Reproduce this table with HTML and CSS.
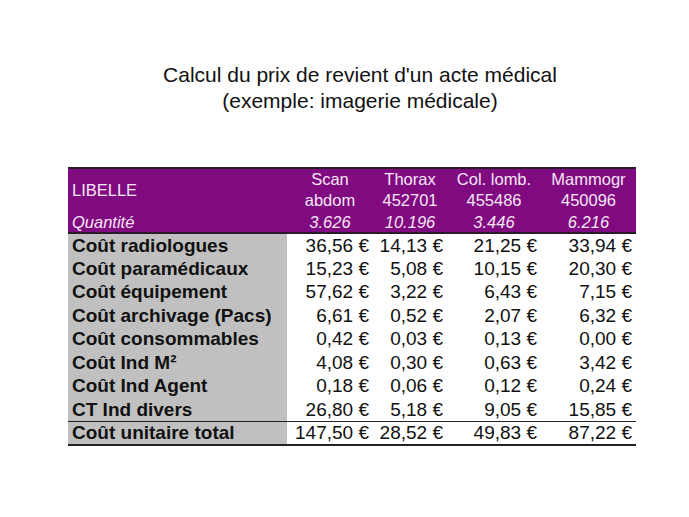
FILE: index.html
```html
<!DOCTYPE html>
<html lang="fr">
<head>
<meta charset="utf-8">
<title>Calcul du prix de revient</title>
<link rel="stylesheet" href="styles.css">
</head>
<body>
<div class="slide">
  <h1 class="title">Calcul du prix de revient d'un acte médical<br>(exemple: imagerie médicale)</h1>
  <table class="cost">
    <colgroup>
      <col class="c-label"><col class="c-scan"><col class="c-thorax"><col class="c-col"><col class="c-mammo">
    </colgroup>
    <thead>
      <tr class="h-main">
        <th class="lib">LIBELLE</th>
        <th>Scan<br>abdom</th>
        <th>Thorax<br>452701</th>
        <th>Col. lomb.<br>455486</th>
        <th>Mammogr<br>450096</th>
      </tr>
      <tr class="h-qty">
        <th class="lib">Quantité</th>
        <th>3.626</th>
        <th>10.196</th>
        <th>3.446</th>
        <th>6.216</th>
      </tr>
    </thead>
    <tbody>
      <tr><th>Coût radiologues</th><td>36,56 €</td><td>14,13 €</td><td>21,25 €</td><td>33,94 €</td></tr>
      <tr><th>Coût paramédicaux</th><td>15,23 €</td><td>5,08 €</td><td>10,15 €</td><td>20,30 €</td></tr>
      <tr><th>Coût équipement</th><td>57,62 €</td><td>3,22 €</td><td>6,43 €</td><td>7,15 €</td></tr>
      <tr><th>Coût archivage (Pacs)</th><td>6,61 €</td><td>0,52 €</td><td>2,07 €</td><td>6,32 €</td></tr>
      <tr><th>Coût consommables</th><td>0,42 €</td><td>0,03 €</td><td>0,13 €</td><td>0,00 €</td></tr>
      <tr><th>Coût Ind M²</th><td>4,08 €</td><td>0,30 €</td><td>0,63 €</td><td>3,42 €</td></tr>
      <tr><th>Coût Ind Agent</th><td>0,18 €</td><td>0,06 €</td><td>0,12 €</td><td>0,24 €</td></tr>
      <tr><th>CT Ind divers</th><td>26,80 €</td><td>5,18 €</td><td>9,05 €</td><td>15,85 €</td></tr>
      <tr class="total"><th>Coût unitaire total</th><td>147,50 €</td><td>28,52 €</td><td>49,83 €</td><td>87,22 €</td></tr>
    </tbody>
  </table>
</div>
</body>
</html>
```

FILE: styles.css
```css
html, body {
  margin: 0;
  padding: 0;
  background: #ffffff;
}

body {
  font-family: "Liberation Sans", Arial, sans-serif;
  color: #111111;
}

.slide {
  width: 689px;
  height: 517px;
  padding-top: 62px;
  box-sizing: border-box;
}

.title {
  margin: 0;
  padding-left: 31px;
  font-size: 21px;
  font-weight: normal;
  line-height: 26px;
  text-align: center;
  color: #111111;
}

.cost {
  margin: 53px 0 0 68px;
  border-collapse: collapse;
  table-layout: fixed;
  width: 568px;
  font-size: 19px;
}

.c-label { width: 219px; }
.c-scan { width: 86px; }
.c-thorax { width: 74px; }
.c-col { width: 94px; }
.c-mammo { width: 95px; }

.cost thead tr {
  background: #800a80;
  color: #f6e6f6;
}

.cost thead th {
  font-weight: normal;
  font-size: 16.5px;
  text-align: center;
  padding: 0;
}

.h-main {
  border-top: 2px solid #2a1a2a;
  height: 42px;
}

.h-main th {
  line-height: 21px;
}

.h-qty {
  height: 22px;
  border-bottom: 2px solid #2a1a2a;
}

.h-qty th {
  font-style: italic;
  line-height: 20px;
}

.cost thead th.lib {
  text-align: left;
  padding-left: 4px;
}

.cost tbody tr {
  height: 23.5px;
}

.cost tbody th {
  background: #c0c0c0;
  text-align: left;
  font-weight: bold;
  font-size: 19px;
  padding: 0 0 0 4px;
  color: #111111;
  line-height: 21px;
  white-space: nowrap;
}

.cost tbody td {
  text-align: right;
  padding: 0 4px 0 0;
  line-height: 21px;
  color: #111111;
  white-space: nowrap;
}

.cost tbody tr.total {
  border-top: 1px solid #222222;
  border-bottom: 2px solid #222222;
}
```
